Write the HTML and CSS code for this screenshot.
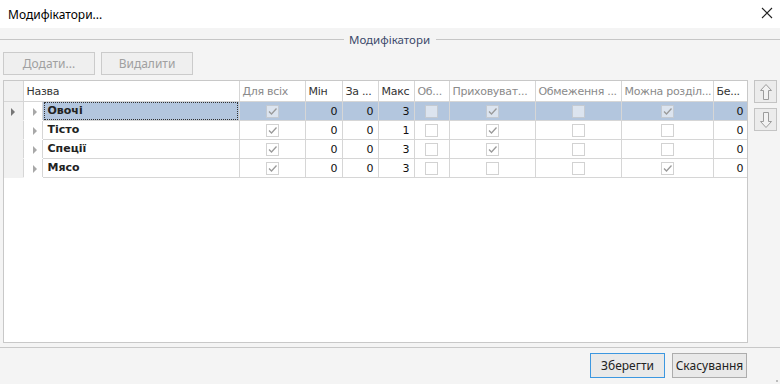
FILE: index.html
```html
<!DOCTYPE html>
<html>
<head>
  <title>Модифікатори...</title>
  <link rel="stylesheet" href="styles.css">
</head>
<body>
  <div class="titlebar">
    <span class="title">Модифікатори...</span>
    <svg class="close" width="12" height="12" viewBox="0 0 12 12"><path d="M1 1 L11 11 M11 1 L1 11" stroke="#222" stroke-width="1.1"/></svg>
  </div>

  <div class="group-head"><span>Модифікатори</span></div>

  <div class="toolbar">
    <button class="btn disabled add">Додати...</button>
    <button class="btn disabled del">Видалити</button>
  </div>

  <div class="main">
    <div class="grid">
      <table>
        <colgroup>
          <col style="width:19px"><col style="width:19px"><col style="width:197px"><col style="width:66px">
          <col style="width:37px"><col style="width:36px"><col style="width:36px"><col style="width:35px">
          <col style="width:86px"><col style="width:86px"><col style="width:92px"><col style="width:35px">
        </colgroup>
        <thead>
          <tr>
            <th class="rh"></th>
            <th colspan="2">Назва</th>
            <th class="dim">Для всіх</th>
            <th>Мін</th>
            <th>За ...</th>
            <th>Макс</th>
            <th class="dim">Об...</th>
            <th class="dim">Приховуват...</th>
            <th class="dim">Обмеження ...</th>
            <th class="dim">Можна розділ...</th>
            <th>Бе...</th>
          </tr>
        </thead>
        <tbody id="rows"></tbody>
      </table>
    </div>
    <div class="side">
      <button class="arrow-btn">
        <svg width="14" height="18" viewBox="0 0 14 18"><path d="M7 1.5 L12.5 7.5 L9.5 7.5 L9.5 16.5 L4.5 16.5 L4.5 7.5 L1.5 7.5 Z" fill="#f2f2f2" stroke="#9c9c9c"/></svg>
      </button>
      <button class="arrow-btn">
        <svg width="14" height="18" viewBox="0 0 14 18"><path d="M7 16.5 L12.5 10.5 L9.5 10.5 L9.5 1.5 L4.5 1.5 L4.5 10.5 L1.5 10.5 Z" fill="#f2f2f2" stroke="#9c9c9c"/></svg>
      </button>
    </div>
  </div>

  <div class="footer">
    <button class="btn primary">Зберегти</button>
    <button class="btn">Скасування</button>
  </div>
  <div class="grip"></div>

  <script>
    const rows = [
      { name: "Овочі",  all: 1, min: 0, za: 0, max: 3, ob: 0, hide: 1, lim: 0, split: 1, be: 0 },
      { name: "Тісто",  all: 1, min: 0, za: 0, max: 1, ob: 0, hide: 1, lim: 0, split: 0, be: 0 },
      { name: "Спеції", all: 1, min: 0, za: 0, max: 3, ob: 0, hide: 1, lim: 0, split: 0, be: 0 },
      { name: "Мясо",   all: 1, min: 0, za: 0, max: 3, ob: 0, hide: 0, lim: 0, split: 1, be: 0 }
    ];

    function box(on) {
      return `<td class="cb"><span class="check">${on ? '<svg width="11" height="11" viewBox="0 0 11 11"><path d="M2 5.5 L4.5 8 L9.5 2.5" fill="none" stroke="#9a9a9a" stroke-width="1.3"/></svg>' : ''}</span></td>`;
    }

    const tbody = document.getElementById("rows");
    rows.forEach((r, i) => {
      const tr = document.createElement("tr");
      if (i === 0) tr.className = "selected";
      tr.innerHTML = `
        <td class="rh">${i === 0 ? '<span class="tri dark"></span>' : ''}</td>
        <td class="exp"><span class="tri"></span></td>
        <td class="name"><span>${r.name}</span></td>
        ${box(r.all)}
        <td class="num">${r.min}</td>
        <td class="num">${r.za}</td>
        <td class="num">${r.max}</td>
        ${box(r.ob)}
        ${box(r.hide)}
        ${box(r.lim)}
        ${box(r.split)}
        <td class="num">${r.be}</td>
      `;
      tbody.appendChild(tr);
    });
  </script>
</body>
</html>
```

FILE: styles.css
```css
body { margin: 0; width: 780px; height: 384px; background: #f4f4f4; font-family: "Noto Sans", "DejaVu Sans", sans-serif; color: #222; overflow: hidden; position: relative; }

.titlebar { height: 28px; background: #fff; display: flex; align-items: center; justify-content: space-between; padding: 0 7px 0 8px; }
.title { font-size: 12px; color: #000; }
.close { margin-top: -3px; }

.group-head { height: 22px; display: flex; align-items: center; }
.group-head::before, .group-head::after { content: ""; flex: 1; border-top: 1px solid #c6c6c6; margin-top: 1px; }
.group-head span { font-size: 11.5px; color: #3d4a6b; padding: 0 6px 0 5px; }

.toolbar { display: flex; gap: 6px; padding: 2px 0 0 3px; }
.btn { font-family: "Noto Sans", "DejaVu Sans", sans-serif; font-size: 12px; height: 24px; padding: 0; background: #e9e9e9; border: 1px solid #adadad; color: #222; }
.btn.disabled { height: 23px; background: #efefef; border-color: #cbcbcb; color: #a0a0a0; }
.add { width: 92px; }
.del { width: 92px; }

.main { display: flex; margin-top: 5px; padding-left: 3px; }
.grid { width: 743px; height: 261px; border: 1px solid #c8c8c8; background: #fff; overflow: hidden; }
table { border-collapse: collapse; table-layout: fixed; width: 744px; font-family: "DejaVu Sans", sans-serif; font-size: 11px; }
th { height: 20px; text-align: left; font-weight: normal; color: #333; padding: 0 3px; letter-spacing: -0.3px; border-right: 1px solid #d6d6d6; border-bottom: 1px solid #d6d6d6; white-space: nowrap; overflow: hidden; }
th.dim { color: #8a8a8a; }
td { height: 18px; padding: 0 4px; border-right: 1px solid #d6d6d6; border-bottom: 1px solid #d6d6d6; white-space: nowrap; }
td.rh, th.rh { background: #f1f1f1; border-bottom-color: #f1f1f1; padding: 0; }
th.rh { border-bottom-color: #d6d6d6; }
td.exp { border-bottom-color: #fff; border-right-color: #d6d6d6; padding: 0; }
td.num { text-align: right; color: #111; }
td.cb { text-align: center; padding: 0; }
td.name { font-weight: bold; color: #222; padding: 0 1px; }
td.name span { display: block; padding: 0 3px; line-height: 16px; border: 1px dotted transparent; }
tr.selected td { background: #b3c6de; }
tr.selected td.rh { background: #f1f1f1; }
tr.selected td.exp { background: #fff; }
tr.selected td.name span { border-color: #333; }

.tri { display: inline-block; width: 0; height: 0; border-left: 4px solid #a8a8a8; border-top: 4px solid transparent; border-bottom: 4px solid transparent; margin-left: 9px; vertical-align: middle; }
.tri.dark { border-left-color: #777; margin-left: 7px; }

.check { display: inline-block; width: 13px; height: 13px; box-sizing: border-box; border: 1px solid #d2d2d2; background: #fff; vertical-align: middle; position: relative; }
.check svg { position: absolute; left: 0; top: 0; }
tr.selected .check { background: #dce4ef; border-color: #c4cad2; }

.side { display: flex; flex-direction: column; gap: 5px; margin-left: 6px; }
.arrow-btn { width: 23px; height: 23px; padding: 0; background: #ececec; border: 1px solid #c4c4c4; display: flex; align-items: center; justify-content: center; }

.footer { display: flex; justify-content: flex-end; gap: 7px; margin-top: 4px; border-top: 1px solid #c8c8c8; padding: 5px 33px 0 0; }
.footer .btn { width: 75px; height: 25px; }
.footer .btn.primary { border-color: #3c97e0; }
.grip { position: absolute; right: 2px; bottom: 2px; width: 2px; height: 2px; background: #bdbdbd; }
```
